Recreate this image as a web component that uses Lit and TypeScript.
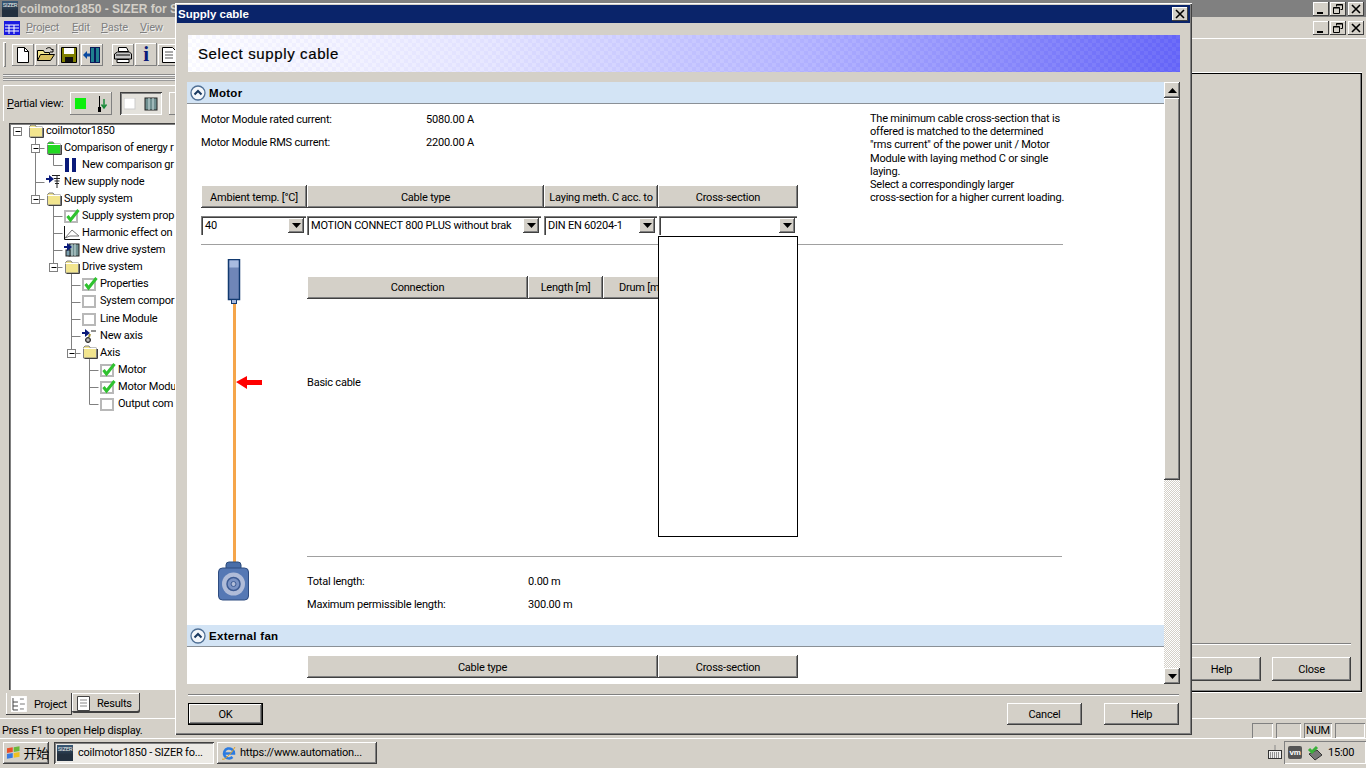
import { LitElement, html, css, svg } from 'lit'
import { customElement } from 'lit/decorators.js'

const ROW_H = 17.06

const folder = (fill = '#f2e58e') => html`<svg width="16" height="14" viewBox="0 0 16 14">
  <path d="M1.500 3.500V2.500L3 1h4l1.500 2h6v10h-13z" fill="${fill}" stroke="#808080" />
  <path d="M1.500 3.500h13" stroke="#fff" />
  <path d="M15.500 4v9.500h-13" stroke="#404040" fill="none" />
</svg>`

const check = (on: boolean) => html`<svg width="17" height="15" viewBox="0 0 17 15">
  <rect x="1" y="3" width="12" height="11" fill="#fff" stroke="#b8b8b8" stroke-width="2" />
  ${on ? svg`<path d="M3.500 8l3 4 8-10" fill="none" stroke="#2fc22f" stroke-width="3" />` : ''}
</svg>`

const bars = html`<svg width="16" height="14" viewBox="0 0 16 14">
  <rect x="1" y="0" width="4" height="14" fill="#0a1a7a" /><rect x="8" y="0" width="4" height="14" fill="#0a1a7a" />
</svg>`

const arrow = svg`<path d="M0 4h3V1l5 4-5 4V6H0z" fill="#0a1a7a" />`

const supplyNode = html`<svg width="16" height="15" viewBox="0 0 16 15">
  ${arrow}<path d="M6 1.500h8M11 2v12M8 4.500h6M8.500 7h5M9 9.500h4" stroke="#222" fill="none" />
</svg>`

const harmonic = html`<svg width="16" height="14" viewBox="0 0 16 14">
  <path d="M0.500 0v13.500H16" stroke="#111" fill="none" />
  <path d="M1 12L8 4l7 6H6z" stroke="#777" fill="none" />
</svg>`

const driveIcon = html`<svg width="16" height="15" viewBox="0 0 16 15">
  <rect x="5" y="2" width="10" height="12" fill="#6f8f90" stroke="#222" />
  <path d="M8 2v12M11 2v12" stroke="#cfe0e0" />
  <rect x="2" y="8" width="4" height="6" fill="#7aa0b0" stroke="#222" />
  ${arrow}
</svg>`

const axisIcon = html`<svg width="16" height="15" viewBox="0 0 16 15">
  ${arrow}<path d="M9 3h5" stroke="#222" />
  <path d="M8 6l-1 3" stroke="#a09030" stroke-width="2" />
  <circle cx="6" cy="12" r="2.500" fill="#888" stroke="#222" /><circle cx="6" cy="12" r="0.800" fill="#fff" />
</svg>`

type Row = { depth: number; icon: unknown; label: string; open?: boolean }

const rows: Row[] = [
  { depth: 0, icon: folder(), label: 'coilmotor1850', open: true },
  { depth: 1, icon: folder('#22d822'), label: 'Comparison of energy r', open: true },
  { depth: 2, icon: bars, label: 'New comparison gr' },
  { depth: 1, icon: supplyNode, label: 'New supply node' },
  { depth: 1, icon: folder(), label: 'Supply system', open: true },
  { depth: 2, icon: check(true), label: 'Supply system prop' },
  { depth: 2, icon: harmonic, label: 'Harmonic effect on' },
  { depth: 2, icon: driveIcon, label: 'New drive system' },
  { depth: 2, icon: folder(), label: 'Drive system', open: true },
  { depth: 3, icon: check(true), label: 'Properties' },
  { depth: 3, icon: check(false), label: 'System compor' },
  { depth: 3, icon: check(false), label: 'Line Module' },
  { depth: 3, icon: axisIcon, label: 'New axis' },
  { depth: 3, icon: folder(), label: 'Axis', open: true },
  { depth: 4, icon: check(true), label: 'Motor' },
  { depth: 4, icon: check(true), label: 'Motor Modu' },
  { depth: 4, icon: check(false), label: 'Output com' },
]

// tree connectors, in coordinates of the tree box
const rowY = (i: number) => Math.round(8 + i * ROW_H) + 0.5
const lineX = (d: number) => 8.5 + 18 * d

function treeLines() {
  const parts: unknown[] = []
  rows.forEach((r, i) => {
    if (r.depth > 0) {
      let p = i - 1
      while (rows[p].depth !== r.depth - 1) p--
      const x = lineX(r.depth)
      parts.push(svg`<path d="M${x} ${rowY(p) + 6}V${rowY(i)}M${x} ${rowY(i)}h9" stroke="#808080" fill="none" />`)
    }
  })
  rows.forEach((r, i) => {
    if (r.open) {
      const x = lineX(r.depth)
      const y = rowY(i)
      parts.push(svg`<rect x="${x - 4}" y="${y - 4}" width="8" height="8" fill="#fff" stroke="#808080" />
        <path d="M${x - 2} ${y}h5" stroke="#000" />`)
    }
  })
  return parts
}

const sizerIcon = html`<span class="sizer">SIZER</span>`

const upTri = html`<svg width="9" height="5" viewBox="0 0 9 5"><path d="M4.500 0L9 5H0z" fill="#000" /></svg>`
const downTri = html`<svg width="9" height="5" viewBox="0 0 9 5"><path d="M0 0h9L4.500 5z" fill="#000" /></svg>`

const chevronCircle = html`<svg width="16" height="16" viewBox="0 0 16 16">
  <circle cx="8" cy="8" r="7" fill="#f4f7fb" stroke="#4f6f94" stroke-width="1.300" />
  <path d="M4.500 9.500L8 6l3.500 3.500" fill="none" stroke="#1a3a60" stroke-width="2" />
</svg>`

const winButtons = html`<div class="win-btns">
  <span class="cap"><svg width="10" height="10" viewBox="0 0 10 10"><path d="M1 8h6v2H1z" /></svg></span>
  <span class="cap"><svg width="10" height="10" viewBox="0 0 10 10"><path d="M3.500 2.500V.5h6v5h-2M.5 3.500h6v6h-6zM.5 4h6M3.500 1h6" fill="none" stroke="#000" /></svg></span>
  <span class="cap gap"><svg width="10" height="10" viewBox="0 0 10 10"><path d="M1 1l8 8M9 1l-8 8" stroke="#000" stroke-width="1.600" /></svg></span>
</div>`

@customElement('app-root')
export class AppRoot extends LitElement {
  static styles = css`
    :host {
      display: block;
      position: relative;
      width: 1366px;
      height: 768px;
      overflow: hidden;
      background: #d4d0c8;
      font: 11px Roboto, 'Liberation Sans', Arial, sans-serif;
      letter-spacing: -0.22px;
      color: #000;
    }
    .desktop { display: flex; flex-direction: column; width: 1366px; height: 768px; }

    .titlebar { height: 17px; background: #808080; display: flex; align-items: center; overflow: hidden; flex: none; padding-left: 2px; }
    .titlebar .name { margin-left: 2px; font: bold 12px 'Liberation Sans', sans-serif; color: #d4d0c8; white-space: nowrap; letter-spacing: 0; }
    .sizer {
      display: inline-block; width: 16px; height: 16px; flex: none; overflow: hidden;
      background: linear-gradient(#3a5a78, #23303f 60%); color: #e8e8e8;
      font-size: 6px; line-height: 8px; text-align: center; letter-spacing: -0.3px;
    }
    .win-btns { margin-left: auto; display: flex; gap: 1px; padding-right: 2px; }
    .cap {
      width: 16px; height: 14px; display: flex; align-items: center; justify-content: center;
      background: #d4d0c8; box-shadow: inset -1px -1px #404040, inset 1px 1px #fff;
    }
    .cap.gap { margin-left: 1px; }

    .menubar { height: 21px; display: flex; align-items: center; flex: none; border-bottom: 1px solid #fff; padding-left: 4px; color: #808080; }
    .menubar span.item { text-shadow: 1px 1px #f0f0f0; }
    .menu-icon { margin-right: 6px; }
    .m-project { width: 46px; } .m-edit { width: 29px; } .m-paste { width: 39px; }

    .toolbar { height: 31px; display: flex; align-items: center; flex: none; padding-left: 3px; overflow: hidden; }
    .grip { width: 3px; height: 25px; box-shadow: inset 1px 1px #fff, inset -1px -1px #808080; margin-right: 6px; }
    .tool {
      width: 22px; height: 22px; margin-right: 1px; flex: none; display: flex; align-items: center; justify-content: center;
      box-shadow: inset -1px -1px #808080, inset 1px 1px #fff;
    }
    .tool.sep { margin-left: 8px; }
    .tool.info { font: bold 21px 'Liberation Serif', serif; color: #0a1a7a; }

    .body { flex: 1; display: flex; min-height: 0; }
    .left { width: 176px; flex: none; display: flex; flex-direction: column; overflow: hidden; }
    .stripes {
      margin: 4px 0 0 3px; height: 7px; flex: none;
      background: repeating-linear-gradient(#8a8a8a 0 1px, #f4f4f4 1px 2px, #9a9a9a 2px 3px, #d4d0c8 3px 4px);
    }
    .partial {
      margin: 4px 0 0 3px; height: 35px; flex: none; display: flex; align-items: center;
      border-left: 1px solid #fff; border-top: 1px solid #fff; padding-left: 3px;
    }
    .partial .lbl { width: 63px; flex: none; white-space: nowrap; }
    .pbtn {
      width: 42px; height: 23px; flex: none; display: flex; align-items: center; justify-content: space-around;
      box-shadow: inset -1px -1px #808080, inset 1px 1px #fff;
    }
    .pbtn.down { margin-left: 8px; box-shadow: inset 1px 1px #404040, inset -1px -1px #fff, inset 2px 2px #808080; background: #e4e2dc; }
    .pbtn.next { margin-left: 7px; }

    .tree {
      position: relative; margin: 2px 0 0 9px; height: 567px; flex: none; background: #fff; overflow: hidden;
      box-shadow: inset 1px 1px #404040, inset 2px 2px #808080;
    }
    .tree-lines { position: absolute; left: 0; top: 0; }
    .rows { position: relative; margin-top: -1px; }
    .row { display: flex; align-items: center; height: 17.06px; white-space: nowrap; }
    .row .ic { width: 18px; flex: none; display: flex; }

    .tabs { display: flex; margin: 3px 0 0 6px; flex: none; height: 22px; }
    .tab {
      display: flex; align-items: center; gap: 7px; height: 20px; padding: 0 5px;
      box-shadow: inset -1px -1px #404040, inset 1px 0 #fff;
    }
    .tab.on { width: 66px; height: 22px; box-sizing: border-box; background: #d4d0c8; box-shadow: inset -1px -1px #404040, inset 1px 0 #fff; }
    .tab.off { width: 68px; box-sizing: border-box; box-shadow: inset -1px -2px #404040, inset 1px 1px #fff; border-radius: 0 0 2px 2px; }

    .right { flex: 1; display: flex; flex-direction: column; padding: 3px 4px 26px 2px; min-width: 0; }
    .frame {
      flex: 1; display: flex; flex-direction: column; justify-content: flex-end;
      box-shadow: 0 -1px #fff, 0 1px #fff, inset 1px 1px #000, inset -1px -1px #000, inset -2px -2px #808080;
      padding: 0 11px 11px 0;
    }
    .frame-sep { height: 1px; background: #808080; box-shadow: 0 1px #fff; margin-bottom: 13px; }
    .frame-btns { display: flex; justify-content: flex-end; gap: 11px; }
    .frame-btns .btn { width: 79px; height: 24px; }

    .btn {
      display: flex; align-items: center; justify-content: center; box-sizing: border-box;
      background: #d4d0c8; box-shadow: inset -1px -1px #404040, inset 1px 1px #fff, inset -2px -2px #808080;
    }
    .btn.default { border: 1px solid #000; }

    .status { height: 20px; flex: none; border-top: 1px solid #fff; box-sizing: border-box; display: flex; align-items: center; padding: 3px 1px 0 2px; position: relative; }
    .status .msg { flex: 1; }
    .cell { height: 15px; box-sizing: border-box; box-shadow: inset 1px 1px #808080, inset -1px -1px #fff; margin-left: 3px; display: flex; align-items: center; justify-content: center; }
    .c1 { width: 21px; } .c2 { width: 25px; } .c3 { width: 28px; } .c4 { width: 30px; }

    .taskbar { height: 30px; flex: none; border-top: 1px solid #fff; box-sizing: border-box; display: flex; align-items: center; padding: 0 0 2px 3px; }
    .task {
      height: 22px; box-sizing: border-box; display: flex; align-items: center; gap: 3px; white-space: nowrap; overflow: hidden;
      box-shadow: inset -1px -1px #404040, inset 1px 1px #fff, inset -2px -2px #808080;
    }
    .start { width: 46px; padding-left: 3px; font-size: 13px; font-family: 'Liberation Sans', 'Noto Sans CJK SC', sans-serif; gap: 2px; }
    .task.app { width: 160px; margin-left: 5px; padding-left: 3px; gap: 5px; background: #eceae5; box-shadow: inset 1px 1px #404040, inset -1px -1px #fff, inset 2px 2px #808080; }
    .task.ie { width: 160px; margin-left: 3px; padding-left: 4px; }
    .kbd { margin-left: auto; }
    .tray { height: 23px; width: 82px; margin-left: 2px; box-sizing: border-box; display: flex; align-items: center; gap: 5px; padding-left: 4px; box-shadow: inset 1px 1px #808080, inset -1px -1px #fff; }
    .vm { width: 14px; height: 13px; background: #555; color: #fff; font: bold 8px/13px 'Liberation Sans', sans-serif; text-align: center; border-radius: 2px; }

    /* the dialog is a window sitting on the desktop */
    .dialog {
      position: absolute; left: 175px; top: 3px; width: 1017px; height: 732px; box-sizing: border-box;
      background: #d4d0c8; display: flex; flex-direction: column; padding: 2px;
      box-shadow: inset 1px 1px #fff, inset -1px -1px #404040, inset -2px -2px #808080;
    }
    .d-title {
      height: 18px; flex: none; background: #0a246a; color: #fff; font: bold 11.5px 'Liberation Sans', sans-serif; letter-spacing: 0;
      display: flex; align-items: center; padding-left: 1px; justify-content: space-between;
    }
    .d-title .cap { margin-right: 2px; }
    .banner {
      margin: 12px 10px 0 11px; height: 37px; flex: none; display: flex; align-items: center; padding-left: 10px;
      font: 15px 'Liberation Sans', sans-serif; letter-spacing: 0.62px; -webkit-text-stroke: 0.2px #000;
      background:
        repeating-conic-gradient(rgba(255,255,255,0.06) 0 25%, rgba(90,90,255,0.04) 0 50%) 0 0 / 8px 8px,
        linear-gradient(90deg, #fff 0%, #e6e6ff 30%, #b4b4ff 62%, #6464f8 100%);
    }
    .scroller { margin: 10px 10px 0 10px; height: 602px; flex: none; display: flex; background: #fff; }
    .content { position: relative; flex: 1; overflow: hidden; min-width: 0; }
    .sbar { width: 16px; flex: none; display: flex; flex-direction: column;
      background: repeating-conic-gradient(#d4d0c8 0 25%, #fff 0 50%) 0 0 / 2px 2px; }
    .sbtn { height: 16px; flex: none; display: flex; align-items: center; justify-content: center; background: #d4d0c8; box-shadow: inset -1px -1px #404040, inset 1px 1px #fff, inset -2px -2px #808080; }
    .thumb { height: 382px; flex: none; background: #d4d0c8; box-shadow: inset -1px -1px #404040, inset 1px 1px #fff, inset -2px -2px #808080; }
    .sbar .fill { flex: 1; }

    .sect {
      height: 22px; box-sizing: border-box; background: #d3e4f5; border-bottom: 1px solid #8a9096; display: flex; align-items: center;
      padding-left: 3px; gap: 3px; font: bold 11.5px 'Liberation Sans', sans-serif; letter-spacing: 0.3px;
    }
    .top { display: flex; padding-left: 14px; height: 140px; }
    .fields { width: 597px; flex: none; display: flex; flex-direction: column; padding-top: 4px; }
    .info { display: flex; height: 23px; align-items: center; }
    .info .k { width: 225px; }
    .note { margin-left: 72px; padding-top: 8px; line-height: 13.2px; white-space: pre-line; }
    .heads { display: grid; grid-template-columns: 106px 237px 114px 140px; margin-top: 31px; }
    .head {
      height: 23px; display: flex; align-items: center; justify-content: center; white-space: nowrap; overflow: hidden; box-sizing: border-box;
      background: #d4d0c8; box-shadow: inset -1px -1px #404040, inset 1px 1px #fff, inset -2px -2px #808080;
    }
    .heads .head, .fan-heads .head { padding-top: 1px; }
    .combos { display: grid; grid-template-columns: 106px 237px 114px 140px; margin-top: 8px; }
    .combo {
      position: relative; height: 19px; display: flex; align-items: center; margin-right: 1px; background: #fff;
      box-shadow: inset 1px 1px #808080, inset 2px 2px #404040, inset -1px -1px #fff;
    }
    .combo.c-type { margin-right: 3px; }
    .combo.c-cross { margin-left: 1px; margin-right: 1px; }
    .combo .txt { flex: 1; overflow: hidden; white-space: nowrap; padding-left: 4px; }
    .combo .arr { width: 16px; height: 15px; flex: none; margin-right: 2px; display: flex; align-items: center; justify-content: center; background: #d4d0c8; box-shadow: inset -1px -1px #404040, inset 1px 1px #fff, inset -2px -2px #808080; }
    .drop { position: absolute; left: -1px; top: 20px; width: 140px; height: 301px; box-sizing: border-box; background: #fff; border: 1px solid #000; z-index: 2; }
    .hr { height: 1px; background: #a0a0a0; }
    .hr.wide { margin-left: 14px; width: 862px; }
    .cable { display: flex; padding-left: 14px; }
    .diagram { width: 106px; flex: none; padding: 14px 0 0 17px; box-sizing: border-box; }
    .diagram svg { display: block; }
    .arm { flex: 1; padding-top: 31px; display: flex; flex-direction: column; }
    .conn-heads { display: grid; grid-template-columns: 221px 75px 75px; width: 371px; }
    .basic { margin-top: 76px; height: 16px; line-height: 16px; }
    .arm .hr { width: 755px; margin-top: 165px; }
    .totals { padding-top: 13px; }
    .totals .info .k { width: 221px; }
    .fan-sect { margin-top: 9px; }
    .fan-heads { display: grid; grid-template-columns: 351px 140px; margin: 8px 0 0 120px; }

    .d-sep { margin: 10px 11px 0 11px; height: 1px; background: #808080; box-shadow: 0 1px #fff; flex: none; }
    .d-btns { display: flex; margin: 8px 11px 0 11px; }
    .d-btns .btn { width: 75px; height: 22px; }
    .d-btns .cancel { margin-left: auto; }
    .d-btns .help { margin-left: 22px; }
  `

  render() {
    return html`
      <div class="desktop">
        <div class="titlebar">
          ${sizerIcon}<span class="name">coilmotor1850 - SIZER for S</span>
          ${winButtons}
        </div>
        <div class="menubar">
          <svg class="menu-icon" width="16" height="14" viewBox="0 0 16 14"><rect width="16" height="14" fill="#1a1ae0" />
            <path d="M1 4h14M1 7h14M1 10h14M5 4v9M10 4v9" stroke="#fff" /></svg>
          <span class="item m-project"><u>P</u>roject</span>
          <span class="item m-edit"><u>E</u>dit</span>
          <span class="item m-paste"><u>P</u>aste</span>
          <span class="item"><u>V</u>iew</span>
          ${winButtons}
        </div>
        <div class="toolbar">
          <span class="grip"></span>
          <span class="tool"><svg width="14" height="16" viewBox="0 0 14 16"><path d="M1.500.5h7l4 4v11h-11z" fill="#fff" stroke="#000" /><path d="M8.500.5v4h4" fill="none" stroke="#000" /></svg></span>
          <span class="tool"><svg width="18" height="15" viewBox="0 0 18 15"><path d="M.5 3.500h6l1 2h5v8h-12z" fill="#f2e58e" stroke="#000" /><path d="M.5 13.500l3-6h14l-4 6z" fill="#d8c060" stroke="#000" /><path d="M9 2c2-2 5-2 6 1l1-1v3h-3" fill="none" stroke="#000" /></svg></span>
          <span class="tool"><svg width="16" height="16" viewBox="0 0 16 16"><path d="M.5.5h15v15H.5z" fill="#808000" stroke="#000" /><rect x="3" y="1" width="10" height="6" fill="#fff" /><rect x="4" y="10" width="8" height="5" fill="#111" /></svg></span>
          <span class="tool"><svg width="18" height="16" viewBox="0 0 18 16"><rect x="7.500" y=".5" width="4" height="15" fill="#1f7f8f" stroke="#0a1a5a" /><rect x="12.500" y=".5" width="4" height="15" fill="#1f7f8f" stroke="#0a1a5a" /><path d="M0 8l4-4v2.500h3v3H4V12z" fill="#0a4aa0" /></svg></span>
          <span class="tool sep"><svg width="18" height="16" viewBox="0 0 18 16"><path d="M4.500.5h8l2 4h-10z" fill="#fff" stroke="#000" /><path d="M.5 7l3-2h12l2 2v5h-17z" fill="#c8c8c8" stroke="#000" /><path d="M3 12.500h12v3H3z" fill="#fff" stroke="#000" /><path d="M2 8h14" stroke="#000" /></svg></span>
          <span class="tool info">i</span>
          <span class="tool"><svg width="14" height="16" viewBox="0 0 14 16"><path d="M.5.5h10l3 3v12H.5z" fill="#fff" stroke="#000" /><path d="M3 5h8M3 8h8M3 11h8" stroke="#555" /></svg></span>
        </div>

        <div class="body">
          <div class="left">
            <div class="stripes"></div>
            <div class="partial">
              <span class="lbl"><u>P</u>artial view:</span>
              <span class="pbtn">
                <svg width="12" height="12" viewBox="0 0 12 12"><rect width="11" height="11" fill="#0cf00c" /></svg>
                <svg width="12" height="16" viewBox="0 0 12 16"><path d="M3.500 0v12" stroke="#000" /><rect x="2" y="11" width="3" height="5" fill="#000" /><path d="M8 3v8M5.500 8.500L8 12l2.500-3.500" fill="none" stroke="#1a8a3a" stroke-width="1.500" /></svg>
              </span>
              <span class="pbtn down">
                <svg width="12" height="12" viewBox="0 0 12 12"><rect width="11" height="11" fill="#fff" stroke="#ccc" /></svg>
                <svg width="14" height="14" viewBox="0 0 14 14"><rect x="1" y="1" width="12" height="12" fill="#6f8f90" stroke="#222" /><path d="M5 1v12M9 1v12" stroke="#cfe0e0" /></svg>
              </span>
              <span class="pbtn next"></span>
            </div>
            <div class="tree">
              <svg class="tree-lines" width="166" height="340">${treeLines()}</svg>
              <div class="rows">
                ${rows.map(
                  (r) => html`<div class="row" style="padding-left:${19 + 18 * r.depth}px">
                    <span class="ic">${r.icon}</span><span>${r.label}</span>
                  </div>`
                )}
              </div>
            </div>
            <div class="tabs">
              <span class="tab on">
                <svg width="16" height="16" viewBox="0 0 16 16"><rect width="16" height="16" fill="#fff" /><path d="M2 2v12M2 6h5M2 10h5M2 14h5" stroke="#444" fill="none" /><path d="M9 3h4M9 8h5M9 13h4" stroke="#777" /></svg>
                Project
              </span>
              <span class="tab off">
                <svg width="13" height="15" viewBox="0 0 13 15"><path d="M.5.5h12v14H.5z" fill="#fff" stroke="#444" /><path d="M3 4h7M3 7h7M3 10h7" stroke="#888" /></svg>
                Results
              </span>
            </div>
          </div>
          <div class="right">
            <div class="frame">
              <div class="frame-sep"></div>
              <div class="frame-btns">
                <span class="btn">Help</span>
                <span class="btn">Close</span>
              </div>
            </div>
          </div>
        </div>

        <div class="status">
          <span class="msg">Press F1 to open Help display.</span>
          <span class="cell c1"></span><span class="cell c2"></span><span class="cell c3">NUM</span><span class="cell c4"></span>
        </div>
        <div class="taskbar">
          <span class="task start">
            <svg width="16" height="16" viewBox="0 0 16 16"><path d="M1 3l6-1v5l-6 1z" fill="#e8502a" /><path d="M8 2l6-1v5l-6 1z" fill="#6cb83a" /><path d="M1 9l6-1v5l-6 1z" fill="#3a7ae0" /><path d="M8 8l6-1v5l-6 1z" fill="#f0c020" /></svg>
            开始
          </span>
          <span class="task app">${sizerIcon}<span>coilmotor1850 - SIZER fo...</span></span>
          <span class="task ie">
            <svg width="16" height="16" viewBox="0 0 16 16"><path d="M3 8.500h10a5 5 0 1 0-1.500 3.500" fill="none" stroke="#2a7ae0" stroke-width="2.500" /><path d="M1 14c2 2 9-5 13-12" fill="none" stroke="#e0a020" /></svg>
            <span>https://www.automation...</span>
          </span>
          <svg class="kbd" width="14" height="15" viewBox="0 0 14 15"><path d="M7 0v5" stroke="#888" /><rect x=".5" y="5.500" width="13" height="8" fill="#eee" stroke="#333" /><path d="M2 8h10M2 10h10M2 12h10" stroke="#333" stroke-dasharray="1 1" /></svg>
          <span class="tray">
            <span class="vm">vm</span>
            <svg width="16" height="16" viewBox="0 0 16 16"><path d="M2 9l6 6 7-5-5-5z" fill="#777" stroke="#333" /><path d="M2 4l3 3 5-5" fill="none" stroke="#3ab03a" stroke-width="3" /></svg>
            <span class="clock">15:00</span>
          </span>
        </div>
      </div>

      <div class="dialog">
        <div class="d-title">
          <span>Supply cable</span>
          <span class="cap"><svg width="10" height="10" viewBox="0 0 10 10"><path d="M1 1l8 8M9 1l-8 8" stroke="#000" stroke-width="1.600" /></svg></span>
        </div>
        <div class="banner">Select supply cable</div>
        <div class="scroller">
          <div class="content">
            <div class="sect">${chevronCircle}<span>Motor</span></div>
            <div class="top">
              <div class="fields">
                <div class="info"><span class="k">Motor Module rated current:</span><span>5080.00 A</span></div>
                <div class="info"><span class="k">Motor Module RMS current:</span><span>2200.00 A</span></div>
                <div class="heads">
                  <span class="head">Ambient temp. [°C]</span>
                  <span class="head">Cable type</span>
                  <span class="head">Laying meth. C acc. to</span>
                  <span class="head">Cross-section</span>
                </div>
                <div class="combos">
                  <div class="combo"><span class="txt">40</span><span class="arr">${downTri}</span></div>
                  <div class="combo c-type"><span class="txt">MOTION CONNECT 800 PLUS without brak</span><span class="arr">${downTri}</span></div>
                  <div class="combo"><span class="txt">DIN EN 60204-1</span><span class="arr">${downTri}</span></div>
                  <div class="combo c-cross"><span class="txt"></span><span class="arr">${downTri}</span><div class="drop"></div></div>
                </div>
              </div>
              <div class="note">The minimum cable cross-section that is
offered is matched to the determined
"rms current" of the power unit / Motor
Module with laying method C or single
laying.
Select a correspondingly larger
cross-section for a higher current loading.</div>
            </div>
            <div class="hr wide"></div>
            <div class="cable">
              <div class="diagram">
                <svg width="45" height="343" viewBox="0 0 45 343">
                  <rect x="15" y="45" width="3" height="260" fill="#f5a54a" />
                  <rect x="10.500" y=".5" width="11" height="40" fill="#6f86b8" stroke="#123a70" stroke-width="1.500" />
                  <rect x="11.500" y="1.500" width="9" height="7" fill="#a8bbe0" />
                  <rect x="13.500" y="40.500" width="5" height="4" fill="#a8bbe0" stroke="#123a70" />
                  <path d="M18 123l11-6v4h15v5H29v4z" fill="#f00" />
                  <path d="M8 311v-5q0-3 3-3h9q3 0 3 3v5z" fill="#4a6ea8" stroke="#2a4a7a" />
                  <rect x=".5" y="309" width="30" height="32" rx="4" fill="#5578b4" stroke="#2e4c80" />
                  <circle cx="15.500" cy="325" r="11.500" fill="#b0bcd8" />
                  <circle cx="15.500" cy="325" r="6.500" fill="#7b93c4" stroke="#3e5c94" stroke-width="1.500" />
                  <circle cx="15.500" cy="325" r="2.500" fill="#b0bcd8" stroke="#3e5c94" />
                </svg>
              </div>
              <div class="arm">
                <div class="conn-heads">
                  <span class="head">Connection</span>
                  <span class="head">Length [m]</span>
                  <span class="head">Drum [m]</span>
                </div>
                <div class="basic">Basic cable</div>
                <div class="hr"></div>
                <div class="totals">
                  <div class="info"><span class="k">Total length:</span><span>0.00 m</span></div>
                  <div class="info"><span class="k">Maximum permissible length:</span><span>300.00 m</span></div>
                </div>
              </div>
            </div>
            <div class="sect fan-sect">${chevronCircle}<span>External fan</span></div>
            <div class="fan-heads">
              <span class="head">Cable type</span>
              <span class="head">Cross-section</span>
            </div>
          </div>
          <div class="sbar">
            <span class="sbtn">${upTri}</span>
            <span class="thumb"></span>
            <span class="fill"></span>
            <span class="sbtn">${downTri}</span>
          </div>
        </div>
        <div class="d-sep"></div>
        <div class="d-btns">
          <span class="btn default">OK</span>
          <span class="btn cancel">Cancel</span>
          <span class="btn help">Help</span>
        </div>
      </div>
    `
  }
}

declare global {
  interface HTMLElementTagNameMap {
    'app-root': AppRoot
  }
}
